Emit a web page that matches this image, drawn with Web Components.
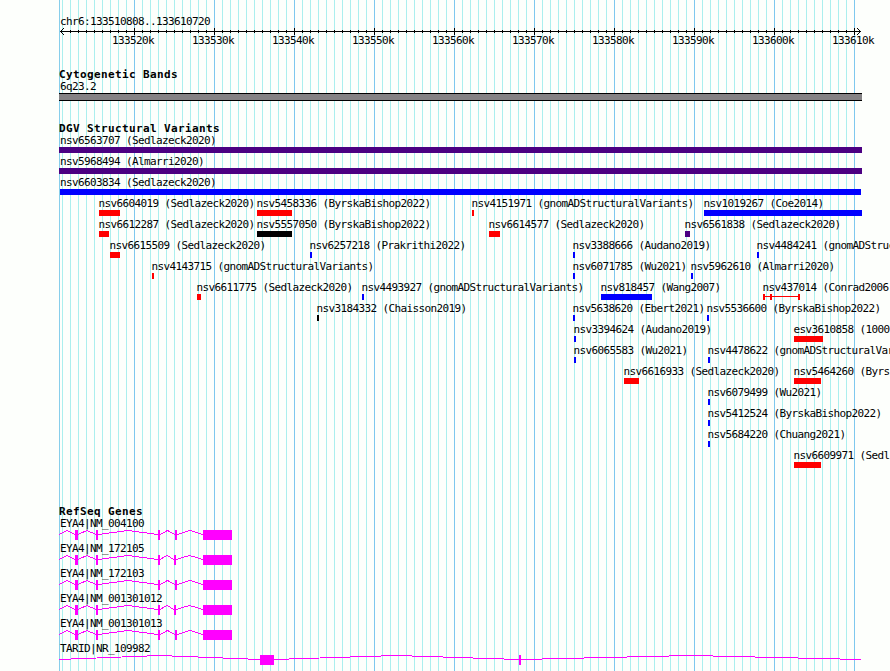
<!DOCTYPE html>
<html lang="en">
<head>
<meta charset="utf-8">
<title>chr6:133510808..133610720</title>
<style>
    html, body {
        margin: 0;
        height: 671px;
        overflow: hidden;
        background: #fdfffc;
    }
</style>
</head>
<body>
<genome-view>
    <genome-ruler region="chr6:133510808..133610720"></genome-ruler>
    <genome-track id="bands" name="Cytogenetic Bands" style="margin-top: 20px"></genome-track>
    <genome-track id="variants" name="DGV Structural Variants" style="margin-top: 19px"></genome-track>
    <genome-track id="genes" name="RefSeq Genes" style="margin-top: 35px"></genome-track>
</genome-view>

<script>
"use strict";

// page x of the first base in the panel
const ORIGIN = 59;

class GenomeView extends HTMLElement {
    constructor() {
        super();
        this.attachShadow({ mode: 'open' }).innerHTML = `
            <style>
                :host {
                    display: block;
                    height: 671px;
                    overflow: hidden;
                    font: 11px/17px "DejaVu Sans Mono", monospace;
                    letter-spacing: -0.622px;
                    color: #000;
                }
                .panel {
                    box-sizing: border-box;
                    width: 803px;
                    height: 671px;
                    padding-top: 13px;
                    margin-left: 59px;
                    background:
                        linear-gradient(#87ceeb, #87ceeb) 0 0 / 1px 100% no-repeat,
                        linear-gradient(90deg, #7ec8ee 1px, transparent 1px) 75px 0 / 80px 100% repeat-x,
                        linear-gradient(90deg, #abefee 1px, transparent 1px) 3px 0 / 8px 100% repeat-x;
                }
                .stack {
                    display: flex;
                    flex-direction: column;
                }
            </style>
            <div class="panel"><div class="stack"><slot></slot></div></div>
        `;
    }
}

class GenomeRuler extends HTMLElement {
    constructor() {
        super();
        this.attachShadow({ mode: 'open' }).innerHTML = `
            <style>
                :host { display: block; }
                .region { height: 15px; padding-left: 1px; }
                svg { display: block; width: 803px; height: 7px; }
                .labels {
                    display: flex;
                    height: 11px;
                    line-height: 11px;
                    margin-left: 34px;
                }
                .labels span { flex: 0 0 80px; text-align: center; }
            </style>
            <div class="region"></div>
            <svg viewBox="0 0 803 7" shape-rendering="crispEdges"></svg>
            <div class="labels"></div>
        `;
    }
    connectedCallback() {
        this.shadowRoot.querySelector('.region').textContent = this.getAttribute('region');
        let ticks = '<rect x="1" y="3" width="801" height="1"/>';
        for (let x = 11; x < 796; x += 8) {
            const major = (x - 75) % 80 === 0;
            ticks += `<rect x="${x}" y="${major ? 0 : 2}" width="1" height="${major ? 7 : 3}"/>`;
        }
        // arrow heads
        for (let i = 1; i < 4; i++) {
            for (const y of [3 - i, 3 + i]) {
                ticks += `<rect x="${1 + i}" y="${y}" width="1" height="1"/>`;
                ticks += `<rect x="${801 - i}" y="${y}" width="1" height="1"/>`;
            }
        }
        this.shadowRoot.querySelector('svg').innerHTML = ticks;
        let labels = '';
        for (let k = 133520; k <= 133610; k += 10) labels += `<span>${k}k</span>`;
        this.shadowRoot.querySelector('.labels').innerHTML = labels;
    }
}

class GenomeTrack extends HTMLElement {
    constructor() {
        super();
        this.attachShadow({ mode: 'open' }).innerHTML = `
            <style>
                :host { display: block; }
                .name {
                    height: 12px;
                    font-weight: bold;
                    letter-spacing: 0.378px;
                    white-space: nowrap;
                }
            </style>
            <div class="name"></div>
            <slot></slot>
        `;
    }
    connectedCallback() {
        this.shadowRoot.querySelector('.name').textContent = this.getAttribute('name');
    }
}

// One row of features. They share a single grid cell and are offset by margin.
class TrackLane extends HTMLElement {
    constructor() {
        super();
        this.attachShadow({ mode: 'open' }).innerHTML = `
            <style>
                :host { display: grid; grid-template-columns: 803px; }
                ::slotted(*) { grid-area: 1 / 1; }
            </style>
            <slot></slot>
        `;
    }
}

class GenomeFeature extends HTMLElement {
    constructor() {
        super();
        this.attachShadow({ mode: 'open' }).innerHTML = `
            <style>
                :host { display: block; }
                .label { height: 15px; white-space: nowrap; }
                .bar { height: 6px; }
                .band {
                    box-sizing: border-box;
                    height: 8px;
                    background: #848284;
                    border: solid #000;
                    border-width: 1px 0;
                }
                svg { display: block; overflow: visible; }
            </style>
            <div class="label"></div>
            <div class="glyph"></div>
        `;
    }
    set data({ label, start, end, color, kind, parts }) {
        const labelElem = this.shadowRoot.querySelector('.label');
        const glyphElem = this.shadowRoot.querySelector('.glyph');
        labelElem.textContent = label;
        labelElem.style.marginLeft = Math.max(1, start - 0.5 - ORIGIN) + 'px';
        glyphElem.style.marginLeft = start - ORIGIN + 'px';
        glyphElem.style.width = end - start + 'px';
        if (kind === 'gene') {
            glyphElem.innerHTML = this.gene(start, end, parts);
        } else if (kind === 'segments') {
            const boxes = parts.map(([a, b]) => `<rect x="${a - start}" y="0" width="${b - a}" height="6"/>`).join('');
            glyphElem.innerHTML = `<svg width="${end - start}" height="6" fill="${color}" shape-rendering="crispEdges">
                <rect y="2" width="${end - start}" height="1"/>${boxes}</svg>`;
        } else {
            glyphElem.classList.add(kind || 'bar');
            if (color) glyphElem.style.background = color;
        }
    }
    // exons as boxes, introns as shallow hats between them
    gene(start, end, exons) {
        let shapes = '';
        let x = start;
        for (const [a, b] of [...exons, [end, end]]) {
            if (a > x) {
                const l = x - start, r = a - start;
                shapes += `<polyline points="${l},4.5 ${(l + r) / 2},0.5 ${r},4.5" fill="none" stroke="#f0f"/>`;
            }
            if (b > a) shapes += `<rect x="${a - start}" y="0" width="${b - a}" height="10" fill="#f0f"/>`;
            x = b;
        }
        return `<svg width="${end - start}" height="10" shape-rendering="crispEdges">${shapes}</svg>`;
    }
}

customElements.define('genome-view', GenomeView);
customElements.define('genome-ruler', GenomeRuler);
customElements.define('genome-track', GenomeTrack);
customElements.define('track-lane', TrackLane);
customElements.define('genome-feature', GenomeFeature);

const RED = '#f00', BLUE = '#00f', BLACK = '#000', INDIGO = '#4b0082';

const variants = [
    [['nsv6563707 (Sedlazeck2020)', 59, 862, INDIGO]],
    [['nsv5968494 (Almarri2020)', 59, 862, INDIGO]],
    [['nsv6603834 (Sedlazeck2020)', 60, 861, BLUE]],
    [
        ['nsv6604019 (Sedlazeck2020)', 99, 120, RED],
        ['nsv5458336 (ByrskaBishop2022)', 257, 292, RED],
        ['nsv4151971 (gnomADStructuralVariants)', 472, 474, RED],
        ['nsv1019267 (Coe2014)', 704, 862, BLUE],
    ],
    [
        ['nsv6612287 (Sedlazeck2020)', 99, 109, RED],
        ['nsv5557050 (ByrskaBishop2022)', 257, 292, BLACK],
        ['nsv6614577 (Sedlazeck2020)', 489, 500, RED],
        ['nsv6561838 (Sedlazeck2020)', 685, 690, INDIGO],
    ],
    [
        ['nsv6615509 (Sedlazeck2020)', 110, 120, RED],
        ['nsv6257218 (Prakrithi2022)', 310, 312, BLUE],
        ['nsv3388666 (Audano2019)', 573, 575, BLUE],
        ['nsv4484241 (gnomADStruc', 757, 759, BLUE],
    ],
    [
        ['nsv4143715 (gnomADStructuralVariants)', 152, 154, RED],
        ['nsv6071785 (Wu2021)', 573, 575, BLUE],
        ['nsv5962610 (Almarri2020)', 691, 693, BLUE],
    ],
    [
        ['nsv6611775 (Sedlazeck2020)', 197, 201, RED],
        ['nsv4493927 (gnomADStructuralVariants)', 362, 364, BLUE],
        ['nsv818457 (Wang2007)', 601, 652, BLUE],
        ['nsv437014 (Conrad2006', 763, 800, RED, [[763, 765], [770, 772], [798, 800]]],
    ],
    [
        ['nsv3184332 (Chaisson2019)', 317, 319, BLACK],
        ['nsv5638620 (Ebert2021)', 573, 575, BLUE],
        ['nsv5536600 (ByrskaBishop2022)', 707, 709, BLUE],
    ],
    [
        ['nsv3394624 (Audano2019)', 574, 576, BLUE],
        ['esv3610858 (1000', 794, 823, RED],
    ],
    [
        ['nsv6065583 (Wu2021)', 574, 576, BLUE],
        ['nsv4478622 (gnomADStructuralVar', 708, 710, BLUE],
    ],
    [
        ['nsv6616933 (Sedlazeck2020)', 624, 639, RED],
        ['nsv5464260 (Byrs', 794, 821, RED],
    ],
    [['nsv6079499 (Wu2021)', 708, 710, BLUE]],
    [['nsv5412524 (ByrskaBishop2022)', 708, 710, BLUE]],
    [['nsv5684220 (Chuang2021)', 708, 710, BLUE]],
    [['nsv6609971 (Sedl', 794, 821, RED]],
];

const eya4 = (x) => [[75, 78], [96, 98], [158, 160], [x, x + 2], [203, 232]];
const genes = [
    ['EYA4|NM_004100', 232, eya4(175)],
    ['EYA4|NM_172105', 232, eya4(174)],
    ['EYA4|NM_172103', 232, eya4(175)],
    ['EYA4|NM_001301012', 232, eya4(174)],
    ['EYA4|NM_001301013', 232, eya4(175)],
    ['TARID|NR_109982', 861, [[260, 274], [519, 521]]],
];

function addLane(trackId, features) {
    const lane = document.createElement('track-lane');
    for (const data of features) {
        const feature = document.createElement('genome-feature');
        feature.data = data;
        lane.appendChild(feature);
    }
    document.getElementById(trackId).appendChild(lane);
}

addLane('bands', [{ label: '6q23.2', start: 59, end: 862, kind: 'band' }]);
for (const row of variants) {
    addLane('variants', row.map(([label, start, end, color, parts]) =>
        ({ label, start, end, color, parts, kind: parts ? 'segments' : 'bar' })));
}
for (const [label, end, parts] of genes) {
    addLane('genes', [{ label, start: 59, end, kind: 'gene', parts }]);
}
</script>
</body>
</html>
